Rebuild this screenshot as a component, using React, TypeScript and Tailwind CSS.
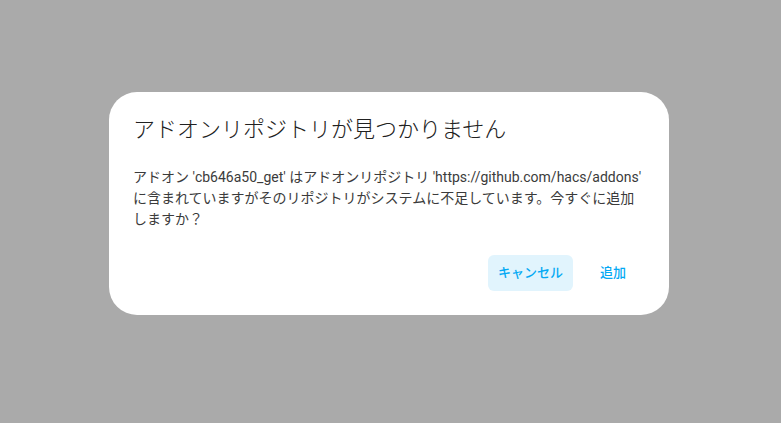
export default function App() {
  return (
    <div
      className="flex h-[423px] w-[781px] items-start bg-[#aaaaaa] pl-[109px] pt-[92px]"
      style={{ fontFamily: 'Roboto, "Noto Sans CJK JP", sans-serif' }}
    >
      <div className="flex w-[560px] flex-col rounded-[28px] bg-white px-6 pb-6 pt-6">
        <h2 className="text-[22px] leading-7 font-light text-[#212121]">
          アドオンリポジトリが見つかりません
        </h2>
        <p className="mt-[23px] text-[14px] leading-[21px] text-[#3b3b3b]">
          アドオン 'cb646a50_get' はアドオンリポジトリ 'https://github.com/hacs/addons'
          に含まれていますがそのリポジトリがシステムに不足しています。今すぐに追加しますか？
        </p>
        <div className="mt-[25px] flex justify-end gap-2">
          <button className="h-9 min-w-16 rounded-md bg-[#e1f4fd] px-[10px] text-[13px] font-medium text-[#03a9f4]">
            キャンセル
          </button>
          <button className="h-9 min-w-16 rounded-md px-[10px] text-[13px] font-medium text-[#03a9f4]">
            追加
          </button>
        </div>
      </div>
    </div>
  );
}
